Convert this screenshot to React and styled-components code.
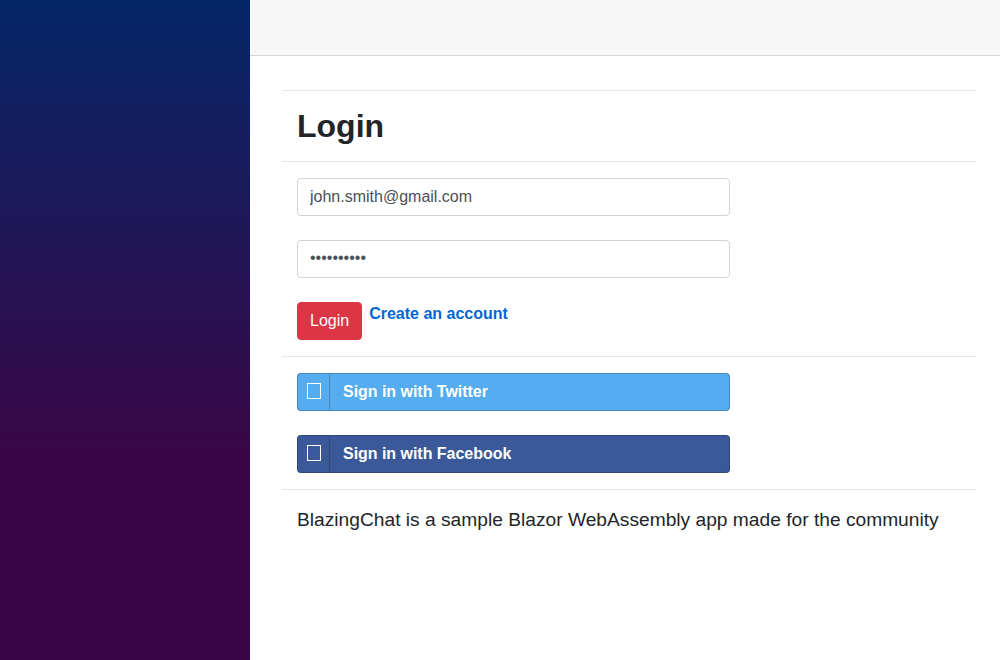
import React from "react";
import styled, { createGlobalStyle } from "styled-components";

const Global = createGlobalStyle`
  *, *::before, *::after { box-sizing: border-box; }
  body {
    margin: 0;
    background: #fff;
    color: #212529;
    font-family: "Liberation Sans", Arial, sans-serif;
    font-size: 16px;
    line-height: 1.5;
  }
`;

const Page = styled.div`
  display: flex;
  height: 100vh;
  overflow: hidden;
`;

const Sidebar = styled.aside`
  flex: 0 0 250px;
  background-image: linear-gradient(180deg, rgb(5, 39, 103) 0%, #3a0647 70%);
`;

const Main = styled.main`
  flex: 1;
  min-width: 0;
`;

const TopRow = styled.header`
  height: 56px;
  background: #f7f7f7;
  border-bottom: 1px solid #d6d5d5;
`;

const Content = styled.div`
  padding: 34px 24px 0 32px;
`;

const Section = styled.section`
  display: flex;
  flex-direction: column;
  align-items: flex-start;
  gap: 24px;
  padding: 16px 15px;
  border-top: 1px solid #e5e5e5;
`;

const Title = styled.h1`
  margin: 0;
  font-size: 32px;
  font-weight: 700;
  line-height: 38px;
`;

const Input = styled.input`
  display: block;
  width: 433px;
  height: 38px;
  padding: 6px 12px;
  border: 1px solid #ced4da;
  border-radius: 4px;
  background: #fff;
  color: #495057;
  font: inherit;

  &[type="password"] {
    padding: 5px 12px 7px;
  }
`;

const Actions = styled.div`
  display: flex;
  align-items: flex-start;
  gap: 7px;
`;

const LoginButton = styled.button`
  height: 38px;
  padding: 6px 12px;
  border: 1px solid #dc3545;
  border-radius: 4px;
  background: #dc3545;
  color: #fff;
  font: inherit;
`;

const Link = styled.a`
  color: #0366d6;
  font-weight: 700;
  text-decoration: none;
`;

const SocialButton = styled.button`
  display: flex;
  align-items: stretch;
  width: 433px;
  height: 38px;
  padding: 0;
  border: 1px solid rgba(0, 0, 0, 0.2);
  border-radius: 4px;
  background: ${(p) => p.$color};
  color: #fff;
  font: inherit;
  font-weight: 700;
  text-align: left;
`;

const IconCell = styled.span`
  display: flex;
  align-items: center;
  justify-content: center;
  width: 32px;
  padding-bottom: 2px;
  border-right: 1px solid rgba(0, 0, 0, 0.2);
`;

const MissingGlyph = styled.span`
  width: 14px;
  height: 16px;
  border: 1px solid #fff;
`;

const SocialLabel = styled.span`
  padding: 6px 13px;
  letter-spacing: -0.03px;
`;

const About = styled.p`
  margin: 0;
  font-size: 19.2px;
  line-height: 28px;
`;

function Social({ color, children }) {
  return (
    <SocialButton type="button" $color={color}>
      <IconCell><MissingGlyph /></IconCell>
      <SocialLabel>{children}</SocialLabel>
    </SocialButton>
  );
}

export default function App() {
  return (
    <>
      <Global />
      <Page>
        <Sidebar />
        <Main>
          <TopRow />
          <Content>
            <Section>
              <Title>Login</Title>
            </Section>
            <Section>
              <Input type="text" defaultValue="john.smith@gmail.com" />
              <Input type="password" defaultValue="abcdefghij" />
              <Actions>
                <LoginButton type="button">Login</LoginButton>
                <Link>Create an account</Link>
              </Actions>
            </Section>
            <Section>
              <Social color="#55acee">Sign in with Twitter</Social>
              <Social color="#3b5998">Sign in with Facebook</Social>
            </Section>
            <Section>
              <About>BlazingChat is a sample Blazor WebAssembly app made for the community</About>
            </Section>
          </Content>
        </Main>
      </Page>
    </>
  );
}
